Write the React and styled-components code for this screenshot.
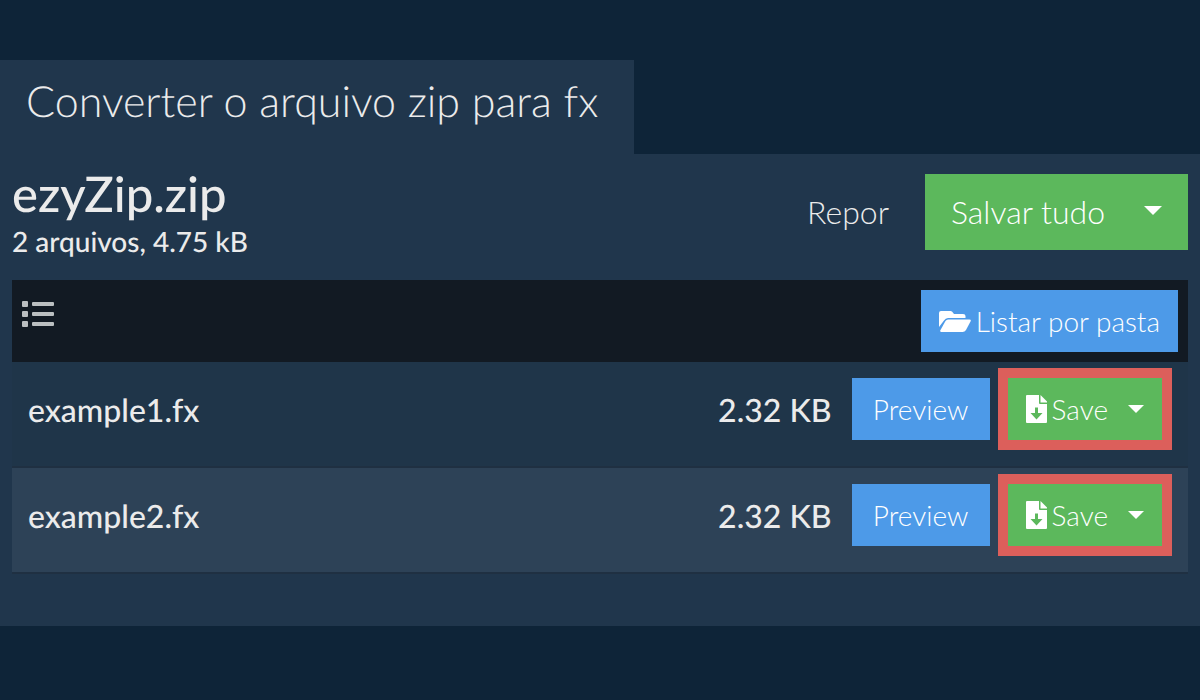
import React, { useState } from 'react';
import styled, { createGlobalStyle } from 'styled-components';

const GlobalStyle = createGlobalStyle`
  * {
    box-sizing: border-box;
  }

  body {
    margin: 0;
    background: #0e2438;
    color: #ebebeb;
    font-family: 'Lato', sans-serif;
    font-weight: 300;
    text-rendering: geometricPrecision;
  }
`;

const Page = styled.main`
  padding: 60px 0;
`;

const Tab = styled.h1`
  width: fit-content;
  margin: 0;
  padding: 16px 36px 26px 26px;
  background: #20364c;
  font-size: 43px;
  line-height: 52px;
  font-weight: 300;
`;

const Panel = styled.section`
  padding: 20px 12px 52px;
  background: #20364c;
`;

const Header = styled.header`
  display: flex;
  align-items: flex-start;
  justify-content: space-between;
  margin-bottom: 22px;
`;

const ArchiveName = styled.h2`
  margin: 0;
  font-size: 49px;
  line-height: 40px;
  font-weight: 500;
`;

const ArchiveInfo = styled.p`
  margin: 0;
  padding-top: 10px;
  font-size: 28px;
  line-height: 34px;
  font-weight: 500;
`;

const Actions = styled.div`
  display: flex;
  align-items: center;
  gap: 36px;
`;

const Button = styled.button`
  display: inline-flex;
  align-items: center;
  border: 0;
  padding: 0;
  background: none;
  color: inherit;
  font-family: inherit;
  font-weight: 300;
  font-size: ${props => (props.$large ? '32px' : '28px')};
  line-height: 34px;
  cursor: pointer;
`;

const BlueButton = styled(Button)`
  height: 62px;
  gap: 5px;
  padding: 0 18px;
  background: #4d9ae8;
  color: #fff;
`;

const PreviewButton = styled(BlueButton)`
  width: 138px;
  justify-content: center;
`;

const SplitButton = styled.div`
  display: flex;
  height: ${props => (props.$large ? '76px' : '62px')};
  background: #5cb85c;
  color: #fff;
`;

const SplitMain = styled(Button)`
  gap: 4px;
  padding: ${props => (props.$large ? '0 21px 0 26px' : '0 12px 0 18px')};
`;

const SplitToggle = styled(Button)`
  justify-content: center;
  padding: ${props => (props.$large ? '0 26px 3px 18px' : '0 18px 0 8px')};
`;

const Caret = styled.span`
  border-style: solid;
  border-color: #fff transparent transparent;
  border-width: ${props => (props.$large ? '9px 9px 0' : '8px 8px 0')};
`;

const Highlight = styled.div`
  width: fit-content;
  border: 10px solid #dc5f5b;
`;

const FileTable = styled.table`
  width: 100%;
  border-collapse: separate;
  border-spacing: 0;
  text-align: left;
`;

const HeadCell = styled.th`
  height: 82px;
  padding: 10px;
  background: #121a23;
  font-weight: 300;
  text-align: ${props => (props.$end ? 'right' : 'left')};
`;

const ListButton = styled(Button)`
  height: 62px;
  padding-bottom: 14px;
  color: #bbbfc1;
`;

const Row = styled.tr`
  background: #1f3549;

  &:nth-child(even) {
    background: #2d4257;
  }
`;

const Cell = styled.td`
  height: 106px;
  padding: ${props => (props.$actions ? '6px 16px 16px 0' : '6px 20px 14px 16px')};
  border-bottom: 2px solid #1f3042;
  font-size: 32px;
  line-height: 40px;
  font-weight: 500;
  white-space: nowrap;
  text-align: ${props => (props.$end ? 'right' : 'left')};
  width: ${props => (props.$fit ? '1px' : 'auto')};
`;

const RowActions = styled.div`
  display: flex;
  align-items: center;
  gap: 8px;
`;

const files = [
  { name: 'example1.fx', size: '2.32 KB' },
  { name: 'example2.fx', size: '2.32 KB' },
];

const FolderIcon = () => (
  <svg width="32" height="28" viewBox="0 0 32 28" fill="currentColor" aria-hidden="true">
    <path d="M0 20V6Q0 4 2 4H11.500Q12.500 4 13.200 4.800L15 7H24Q26.500 7 26.500 9V11H9Q6.500 11 5 13.500Z" />
    <path d="M9 12.500H30.500Q32.500 12.500 31.500 14.500L27 23Q25.800 25 23.500 25H2.500Q0.500 25 1.500 23L6.500 14Q7.500 12.500 9 12.500Z" />
  </svg>
);

const FileDownIcon = () => (
  <svg width="22" height="28" viewBox="0 0 22 28" fill="currentColor" aria-hidden="true">
    <path fillRule="evenodd" d="M1 0H13V8Q13 9 14 9H21V27Q21 28 20 28H1Q0 28 0 27V1Q0 0 1 0ZM9 12.500V18H4.500L10.500 24.500L16.500 18H12V12.500Z" />
    <path d="M14.500 0L21 6.500V7.500H14.500Z" />
  </svg>
);

const ListIcon = () => (
  <svg width="32" height="26" viewBox="0 0 32 26" fill="currentColor" aria-hidden="true">
    {[0, 10, 20].map(y => (
      <React.Fragment key={y}>
        <rect x="0" y={y} width="6" height="6" rx="1" />
        <rect x="10" y={y + 1} width="22" height="4" rx="1" />
      </React.Fragment>
    ))}
  </svg>
);

function FileRow({ file }) {
  return (
    <Row>
      <Cell>{file.name}</Cell>
      <Cell $end $fit>{file.size}</Cell>
      <Cell $actions $fit>
        <RowActions>
          <PreviewButton>Preview</PreviewButton>
          <Highlight>
            <SplitButton>
              <SplitMain><FileDownIcon />Save</SplitMain>
              <SplitToggle aria-label={`Save ${file.name}`}><Caret /></SplitToggle>
            </SplitButton>
          </Highlight>
        </RowActions>
      </Cell>
    </Row>
  );
}

function App() {
  const [items, setItems] = useState(files);

  return (
    <Page>
      <GlobalStyle />
      <Tab>Converter o arquivo zip para fx</Tab>
      <Panel>
        <Header>
          <div>
            <ArchiveName>ezyZip.zip</ArchiveName>
            <ArchiveInfo>2 arquivos, 4.75 kB</ArchiveInfo>
          </div>
          <Actions>
            <Button $large onClick={() => setItems(files)}>Repor</Button>
            <SplitButton $large>
              <SplitMain $large>Salvar tudo</SplitMain>
              <SplitToggle $large aria-label="Salvar tudo"><Caret $large /></SplitToggle>
            </SplitButton>
          </Actions>
        </Header>
        <FileTable>
          <thead>
            <tr>
              <HeadCell>
                <ListButton aria-label="Lista"><ListIcon /></ListButton>
              </HeadCell>
              <HeadCell $end colSpan={2}>
                <BlueButton><FolderIcon />Listar por pasta</BlueButton>
              </HeadCell>
            </tr>
          </thead>
          <tbody>
            {items.map(file => (
              <FileRow key={file.name} file={file} />
            ))}
          </tbody>
        </FileTable>
      </Panel>
    </Page>
  );
}

export default App;
